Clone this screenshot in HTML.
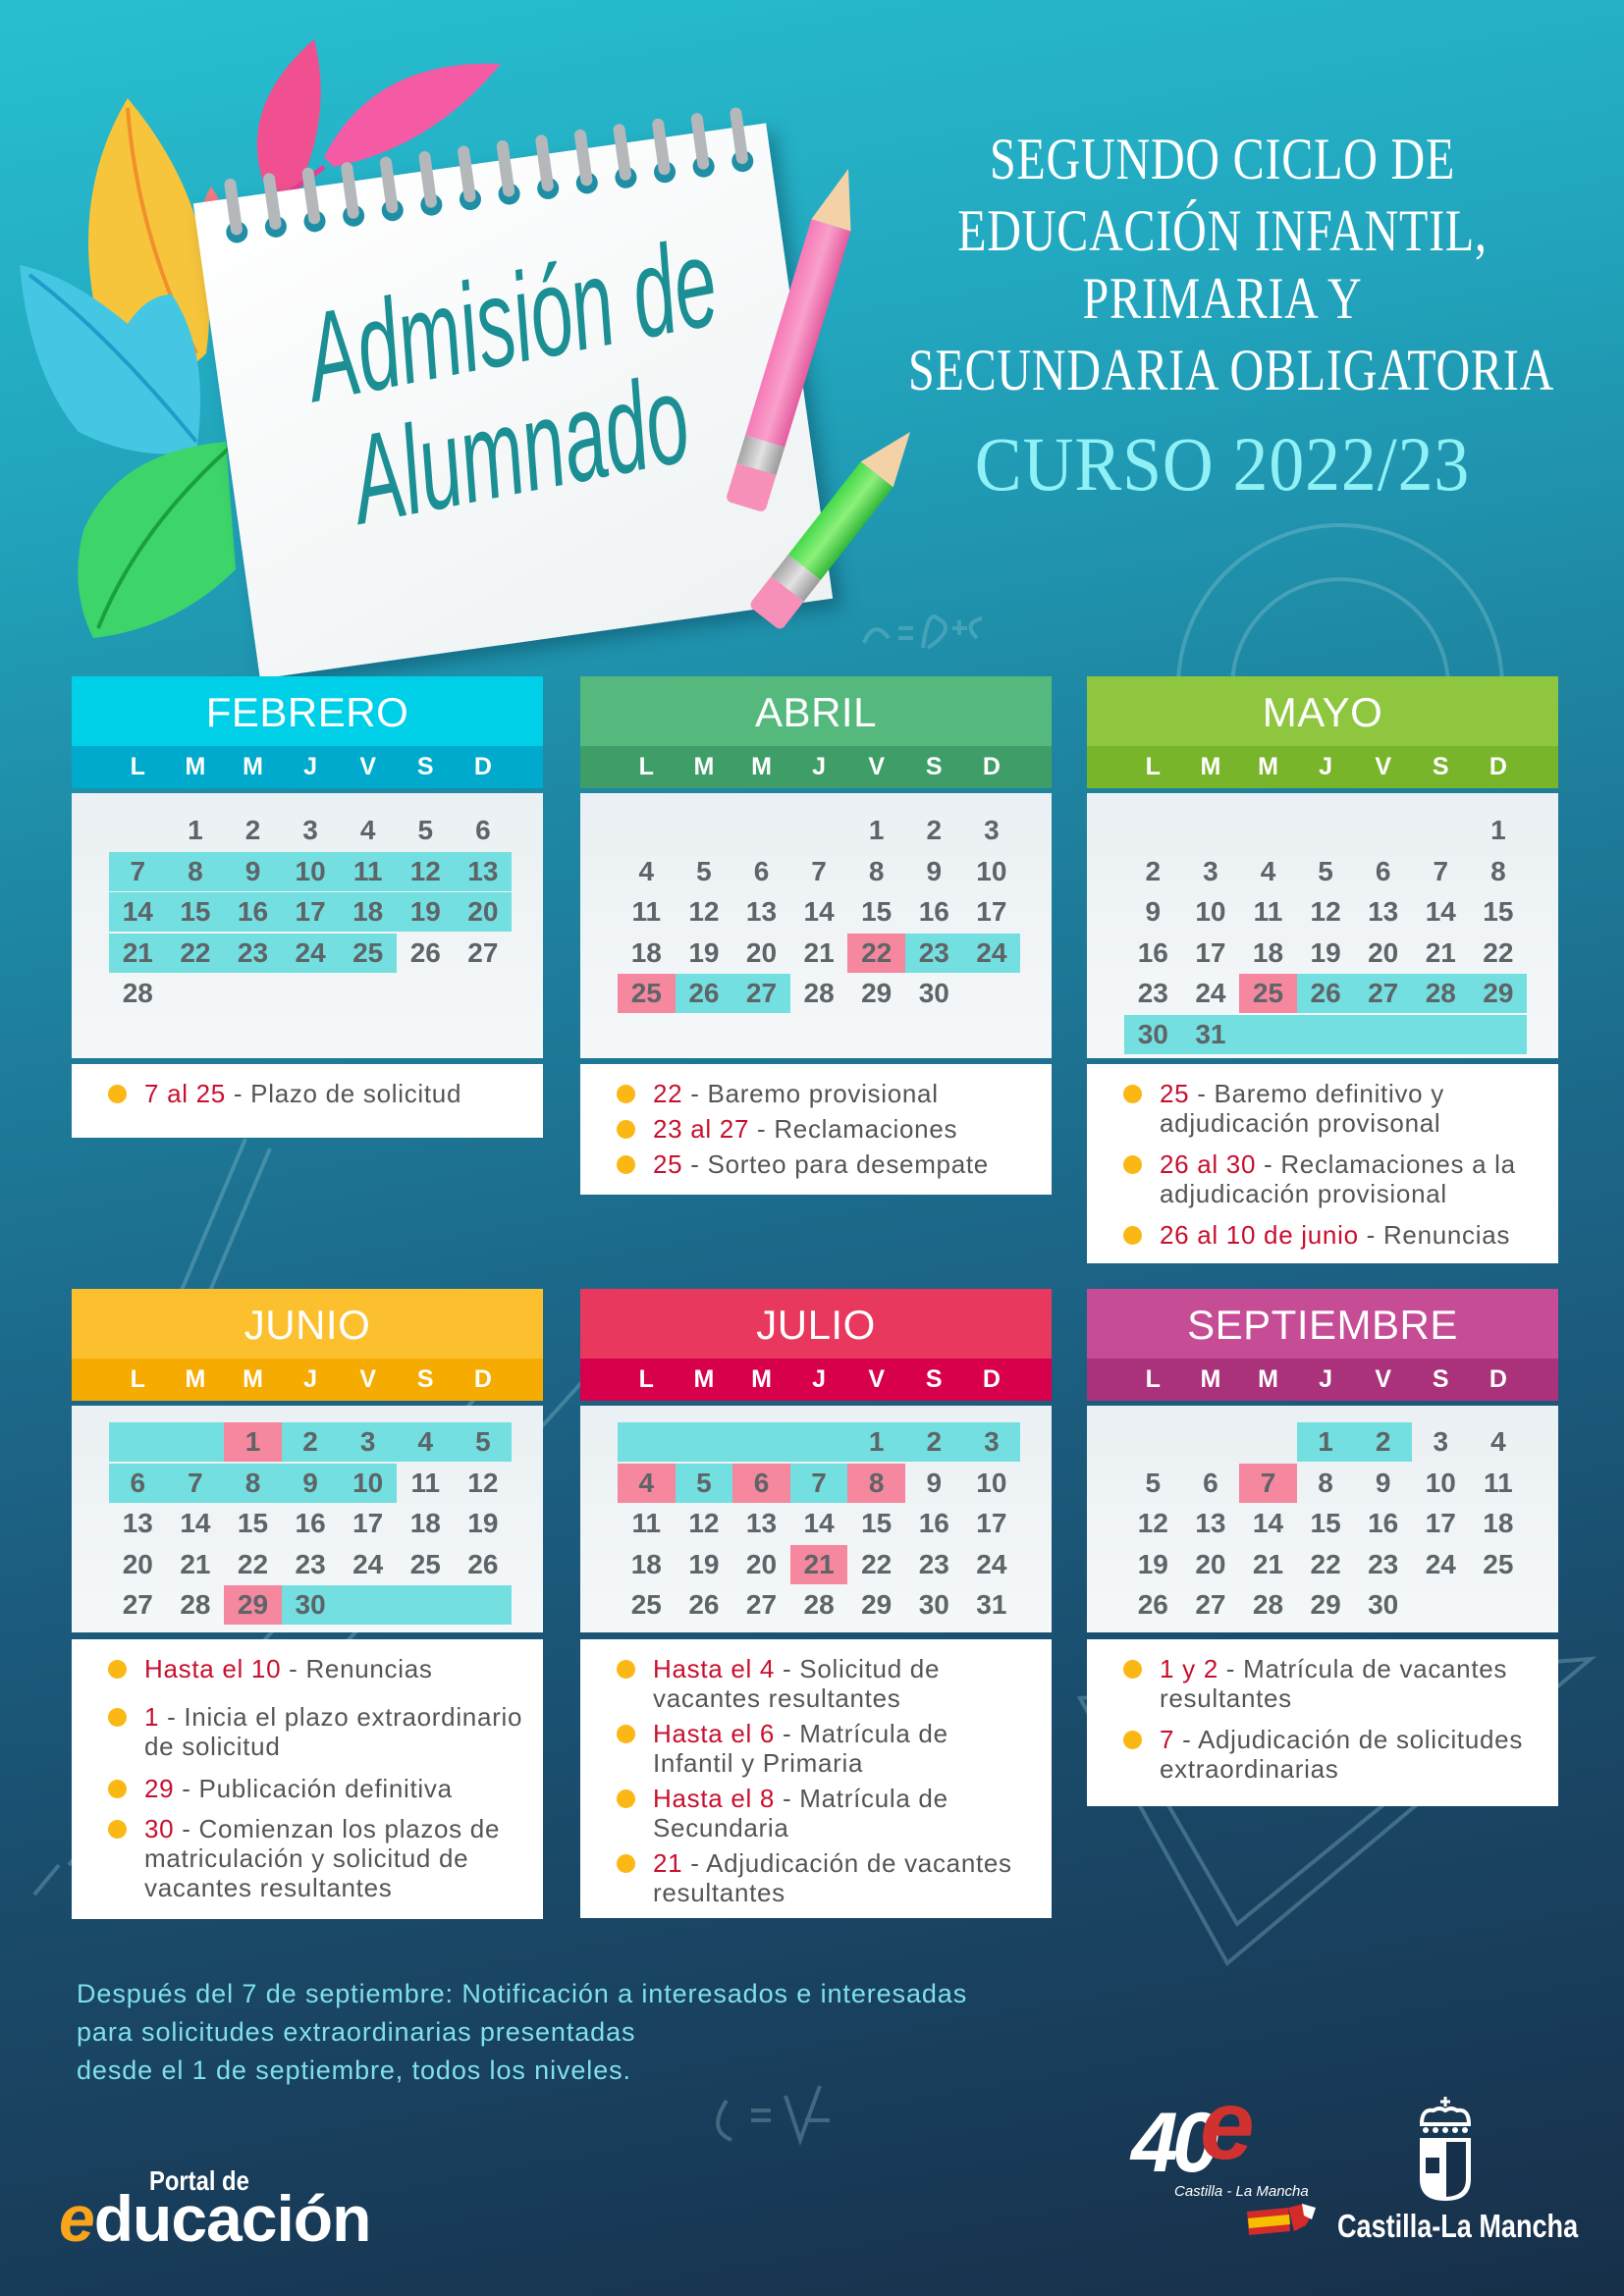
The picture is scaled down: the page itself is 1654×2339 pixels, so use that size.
<!DOCTYPE html>
<html><head><meta charset="utf-8">
<style>
*{margin:0;padding:0;box-sizing:border-box}
body{width:1654px;height:2339px;position:relative;overflow:hidden;font-family:"Liberation Sans",sans-serif;
background:linear-gradient(170deg,#28bfd0 0%,#22a7bf 18%,#1e86a2 36%,#1c6688 55%,#1a4a6a 75%,#172f49 100%);}
.abs{position:absolute}
.card{position:absolute;width:480px}
.tit{height:71px;color:#fff;font-size:42px;text-align:center;line-height:73px;letter-spacing:0.5px}
.dr{height:43px;display:grid;grid-template-columns:repeat(7,58.6px);padding-left:38px;color:#fff;font-weight:bold;font-size:25px;line-height:43px;text-align:center}
.body{position:absolute;left:0;width:480px;background:linear-gradient(180deg,#eaf0f3,#f5f8f9);padding-left:38px}
.r{display:grid;grid-template-columns:repeat(7,58.6px);height:39px;margin-bottom:2.5px}
.r span{text-align:center;line-height:40px;font-weight:bold;font-size:28px;color:#5e6467}
.r .t{background:#73dfe0}
.r .p{background:#f5879f}
.notes{position:absolute;left:0;width:480px;background:#fff;padding:15px 0 0 74px;color:#555;font-size:26px;letter-spacing:0.7px;line-height:30px;white-space:nowrap}
.notes div{position:relative;margin-bottom:12px}
.notes div:before{content:"";position:absolute;left:-37px;top:6px;width:19px;height:19px;border-radius:50%;background:#fbb714}
.notes b{font-weight:normal;color:#c8102e}
.hd{position:absolute;left:845px;width:800px;text-align:center;color:#fff;font-family:"Liberation Serif",serif;font-size:60px;transform:scaleX(0.8);transform-origin:400px 0;white-space:nowrap;letter-spacing:1px}
</style></head><body>

<svg class="abs" style="left:0;top:0" width="1654" height="2339">
<g fill="none" stroke="#9fd0dc" stroke-opacity="0.3" stroke-width="4">
<path d="M1200 700 A165 165 0 0 1 1530 700"/>
<path d="M1255 700 A110 110 0 0 1 1475 700"/>
<path d="M880 655 q10 -25 25 -5 M915 640 h15 M915 650 h15 M940 660 q5 -40 15 -30 q20 10 -10 30 M970 640 h15 M977 632 v15 M995 650 q-15 -15 5 -20"/>
<path d="M250 1160 L170 1350 M275 1170 L195 1360 M160 1360 l-5 40"/>
<path d="M540 1360 L70 1900 M600 1400 L120 1930 M60 1900 l-25 30"/>
<path d="M1100 1730 L1620 1690 L1250 2000 Z M1150 1770 L1530 1740 L1260 1960 Z"/>
<path d="M740 2140 q-20 30 5 40 M765 2150 h20 M765 2160 h20 M800 2135 l15 45 l20 -55 M820 2160 h25"/>
</g>
</svg>

<svg class="abs" style="left:0;top:0" width="900" height="700">
<path d="M270 190 Q240 110 320 40 Q340 120 300 200 Z" fill="#f0508f"/>
<path d="M330 160 Q380 60 510 65 Q440 150 340 170 Z" fill="#f55aa5"/>
<path d="M330 170 L250 230" stroke="#e24090" stroke-width="5"/>
<path d="M215 190 Q190 230 220 300 Q250 240 215 190Z" fill="#f07a80"/>
<path d="M130 100 Q70 200 100 330 Q150 420 210 360 Q230 220 130 100Z" fill="#f7c53b"/>
<path d="M130 110 Q140 240 200 360" stroke="#f0902c" stroke-width="4" fill="none"/>
<path d="M20 270 Q70 280 130 330 Q150 300 175 300 Q215 360 200 460 Q140 470 80 440 Q30 380 20 270Z" fill="#45c7e3"/>
<path d="M30 280 Q110 340 200 450" stroke="#1aa0c8" stroke-width="4" fill="none"/>
<path d="M230 450 Q120 460 85 540 Q70 600 95 650 Q180 640 240 580 Z" fill="#3dd46a"/>
<path d="M235 455 Q140 540 100 640" stroke="#18a040" stroke-width="4" fill="none"/>
</svg>

<div class="abs" style="left:228px;top:164px;width:589px;height:489px;transform:rotate(-8deg);background:linear-gradient(160deg,#ffffff,#eef2f3);box-shadow:8px 10px 18px rgba(0,40,60,.35)">
 <svg class="abs" style="left:0;top:-40px" width="589" height="100">
  <g>
  <circle cx="40" cy="75" r="11" fill="#1f8fa6"/><rect x="34" y="20" width="12" height="58" rx="6" fill="#b5b8bb"/>
  <circle cx="80" cy="75" r="11" fill="#1f8fa6"/><rect x="74" y="20" width="12" height="58" rx="6" fill="#b5b8bb"/>
  <circle cx="120" cy="75" r="11" fill="#1f8fa6"/><rect x="114" y="20" width="12" height="58" rx="6" fill="#b5b8bb"/>
  <circle cx="160" cy="75" r="11" fill="#1f8fa6"/><rect x="154" y="20" width="12" height="58" rx="6" fill="#b5b8bb"/>
  <circle cx="200" cy="75" r="11" fill="#1f8fa6"/><rect x="194" y="20" width="12" height="58" rx="6" fill="#b5b8bb"/>
  <circle cx="240" cy="75" r="11" fill="#1f8fa6"/><rect x="234" y="20" width="12" height="58" rx="6" fill="#b5b8bb"/>
  <circle cx="280" cy="75" r="11" fill="#1f8fa6"/><rect x="274" y="20" width="12" height="58" rx="6" fill="#b5b8bb"/>
  <circle cx="320" cy="75" r="11" fill="#1f8fa6"/><rect x="314" y="20" width="12" height="58" rx="6" fill="#b5b8bb"/>
  <circle cx="360" cy="75" r="11" fill="#1f8fa6"/><rect x="354" y="20" width="12" height="58" rx="6" fill="#b5b8bb"/>
  <circle cx="400" cy="75" r="11" fill="#1f8fa6"/><rect x="394" y="20" width="12" height="58" rx="6" fill="#b5b8bb"/>
  <circle cx="440" cy="75" r="11" fill="#1f8fa6"/><rect x="434" y="20" width="12" height="58" rx="6" fill="#b5b8bb"/>
  <circle cx="480" cy="75" r="11" fill="#1f8fa6"/><rect x="474" y="20" width="12" height="58" rx="6" fill="#b5b8bb"/>
  <circle cx="520" cy="75" r="11" fill="#1f8fa6"/><rect x="514" y="20" width="12" height="58" rx="6" fill="#b5b8bb"/>
  <circle cx="560" cy="75" r="11" fill="#1f8fa6"/><rect x="554" y="20" width="12" height="58" rx="6" fill="#b5b8bb"/>
  </g>
 </svg>
 <div class="abs" style="left:-25px;top:100px;width:589px;text-align:center;font-style:italic;font-size:128px;line-height:130px;color:#1b8f93;transform:rotate(-3deg) scaleX(0.6);white-space:nowrap">Admisión de</div>
 <div class="abs" style="left:0px;top:230px;width:589px;text-align:center;font-style:italic;font-size:128px;line-height:130px;color:#1b8f93;transform:rotate(-3deg) scaleX(0.6);white-space:nowrap">Alumnado</div>
</div>

<div class="abs" style="left:843px;top:172px;width:42px;height:370px;transform:rotate(17deg);transform-origin:21px 0">
 <div style="width:0;height:0;border-left:21px solid transparent;border-right:21px solid transparent;border-bottom:60px solid #f4d2a8;position:relative"></div>
 <div style="width:42px;height:230px;background:linear-gradient(90deg,#f67ab8,#f9a0cc,#e45c9e)"></div>
 <div style="width:42px;height:30px;background:linear-gradient(90deg,#a5a5a5,#e2e2e2,#9a9a9a)"></div>
 <div style="width:42px;height:40px;background:#f690b8;border-radius:0 0 6px 6px"></div>
</div>
<div class="abs" style="left:906px;top:440px;width:42px;height:250px;transform:rotate(38deg);transform-origin:21px 0">
 <div style="width:0;height:0;border-left:21px solid transparent;border-right:21px solid transparent;border-bottom:55px solid #f4d2a8"></div>
 <div style="width:42px;height:120px;background:linear-gradient(90deg,#45d94a,#8cf07a,#34b83a)"></div>
 <div style="width:42px;height:28px;background:linear-gradient(90deg,#a5a5a5,#e2e2e2,#9a9a9a)"></div>
 <div style="width:42px;height:38px;background:#f690b8;border-radius:0 0 6px 6px"></div>
</div>

<div class="hd" style="top:128px">SEGUNDO CICLO DE</div>
<div class="hd" style="top:201px">EDUCACIÓN INFANTIL,</div>
<div class="hd" style="top:270px">PRIMARIA Y</div>
<div class="hd" style="top:343px">SECUNDARIA OBLIGATORIA</div>
<div class="hd" style="top:428px;font-size:78px;color:#8ff1f6;transform:scaleX(0.92)">CURSO 2022/23</div>

<div class="card" style="left:73px;top:689px">
 <div class="tit" style="background:#00cfe8">FEBRERO</div>
 <div class="dr" style="background:#00aacd"><span>L</span><span>M</span><span>M</span><span>J</span><span>V</span><span>S</span><span>D</span></div>
 <div class="body" style="top:119px;height:270px;padding-top:18px">
  <div class="r"><span></span><span>1</span><span>2</span><span>3</span><span>4</span><span>5</span><span>6</span></div>
  <div class="r"><span class="t">7</span><span class="t">8</span><span class="t">9</span><span class="t">10</span><span class="t">11</span><span class="t">12</span><span class="t">13</span></div>
  <div class="r"><span class="t">14</span><span class="t">15</span><span class="t">16</span><span class="t">17</span><span class="t">18</span><span class="t">19</span><span class="t">20</span></div>
  <div class="r"><span class="t">21</span><span class="t">22</span><span class="t">23</span><span class="t">24</span><span class="t">25</span><span>26</span><span>27</span></div>
  <div class="r"><span>28</span></div>
 </div>
 <div class="notes" style="top:395px;height:75px">
  <div><b>7 al 25</b> - Plazo de solicitud</div>
 </div>
</div>

<div class="card" style="left:591px;top:689px">
 <div class="tit" style="background:#55b97e">ABRIL</div>
 <div class="dr" style="background:#3f9e68"><span>L</span><span>M</span><span>M</span><span>J</span><span>V</span><span>S</span><span>D</span></div>
 <div class="body" style="top:119px;height:270px;padding-top:18px">
  <div class="r"><span></span><span></span><span></span><span></span><span>1</span><span>2</span><span>3</span></div>
  <div class="r"><span>4</span><span>5</span><span>6</span><span>7</span><span>8</span><span>9</span><span>10</span></div>
  <div class="r"><span>11</span><span>12</span><span>13</span><span>14</span><span>15</span><span>16</span><span>17</span></div>
  <div class="r"><span>18</span><span>19</span><span>20</span><span>21</span><span class="p">22</span><span class="t">23</span><span class="t">24</span></div>
  <div class="r"><span class="p">25</span><span class="t">26</span><span class="t">27</span><span>28</span><span>29</span><span>30</span></div>
 </div>
 <div class="notes" style="top:395px;height:133px;line-height:30px">
  <div style="margin-bottom:6px"><b>22</b> - Baremo provisional</div>
  <div style="margin-bottom:6px"><b>23 al 27</b> - Reclamaciones</div>
  <div><b>25</b> - Sorteo para desempate</div>
 </div>
</div>

<div class="card" style="left:1107px;top:689px">
 <div class="tit" style="background:#8ec63f">MAYO</div>
 <div class="dr" style="background:#79b52a"><span>L</span><span>M</span><span>M</span><span>J</span><span>V</span><span>S</span><span>D</span></div>
 <div class="body" style="top:119px;height:270px;padding-top:18px">
  <div class="r"><span></span><span></span><span></span><span></span><span></span><span></span><span>1</span></div>
  <div class="r"><span>2</span><span>3</span><span>4</span><span>5</span><span>6</span><span>7</span><span>8</span></div>
  <div class="r"><span>9</span><span>10</span><span>11</span><span>12</span><span>13</span><span>14</span><span>15</span></div>
  <div class="r"><span>16</span><span>17</span><span>18</span><span>19</span><span>20</span><span>21</span><span>22</span></div>
  <div class="r"><span>23</span><span>24</span><span class="p">25</span><span class="t">26</span><span class="t">27</span><span class="t">28</span><span class="t">29</span></div>
  <div class="r"><span class="t">30</span><span class="t">31</span><span class="t"></span><span class="t"></span><span class="t"></span><span class="t"></span><span class="t"></span></div>
 </div>
 <div class="notes" style="top:395px;height:203px">
  <div><b>25</b> - Baremo definitivo y<br>adjudicación provisonal</div>
  <div><b>26 al 30</b> - Reclamaciones a la<br>adjudicación provisional</div>
  <div><b>26 al 10 de junio</b> - Renuncias</div>
 </div>
</div>

<div class="card" style="left:73px;top:1313px">
 <div class="tit" style="background:#fcc02e">JUNIO</div>
 <div class="dr" style="background:#f6ab00"><span>L</span><span>M</span><span>M</span><span>J</span><span>V</span><span>S</span><span>D</span></div>
 <div class="body" style="top:119px;height:231px;padding-top:17px">
  <div class="r"><span class="t"></span><span class="t"></span><span class="p">1</span><span class="t">2</span><span class="t">3</span><span class="t">4</span><span class="t">5</span></div>
  <div class="r"><span class="t">6</span><span class="t">7</span><span class="t">8</span><span class="t">9</span><span class="t">10</span><span>11</span><span>12</span></div>
  <div class="r"><span>13</span><span>14</span><span>15</span><span>16</span><span>17</span><span>18</span><span>19</span></div>
  <div class="r"><span>20</span><span>21</span><span>22</span><span>23</span><span>24</span><span>25</span><span>26</span></div>
  <div class="r"><span>27</span><span>28</span><span class="p">29</span><span class="t">30</span><span class="t"></span><span class="t"></span><span class="t"></span></div>
 </div>
 <div class="notes" style="top:357px;height:285px">
  <div style="margin-bottom:19px"><b>Hasta el 10</b> - Renuncias</div>
  <div style="margin-bottom:13px"><b>1</b> - Inicia el plazo extraordinario<br>de solicitud</div>
  <div style="margin-bottom:11px"><b>29</b> - Publicación definitiva</div>
  <div><b>30</b> - Comienzan los plazos de<br>matriculación y solicitud de<br>vacantes resultantes</div>
 </div>
</div>

<div class="card" style="left:591px;top:1313px">
 <div class="tit" style="background:#e9385e">JULIO</div>
 <div class="dr" style="background:#d8004d"><span>L</span><span>M</span><span>M</span><span>J</span><span>V</span><span>S</span><span>D</span></div>
 <div class="body" style="top:119px;height:231px;padding-top:17px">
  <div class="r"><span class="t"></span><span class="t"></span><span class="t"></span><span class="t"></span><span class="t">1</span><span class="t">2</span><span class="t">3</span></div>
  <div class="r"><span class="p">4</span><span class="t">5</span><span class="p">6</span><span class="t">7</span><span class="p">8</span><span>9</span><span>10</span></div>
  <div class="r"><span>11</span><span>12</span><span>13</span><span>14</span><span>15</span><span>16</span><span>17</span></div>
  <div class="r"><span>18</span><span>19</span><span>20</span><span class="p">21</span><span>22</span><span>23</span><span>24</span></div>
  <div class="r"><span>25</span><span>26</span><span>27</span><span>28</span><span>29</span><span>30</span><span>31</span></div>
 </div>
 <div class="notes" style="top:357px;height:284px">
  <div style="margin-bottom:6px"><b>Hasta el 4</b> - Solicitud de<br>vacantes resultantes</div>
  <div style="margin-bottom:6px"><b>Hasta el 6</b> - Matrícula de<br>Infantil y Primaria</div>
  <div style="margin-bottom:6px"><b>Hasta el 8</b> - Matrícula de<br>Secundaria</div>
  <div><b>21</b> - Adjudicación de vacantes<br>resultantes</div>
 </div>
</div>

<div class="card" style="left:1107px;top:1313px">
 <div class="tit" style="background:#c64c95">SEPTIEMBRE</div>
 <div class="dr" style="background:#a9327b"><span>L</span><span>M</span><span>M</span><span>J</span><span>V</span><span>S</span><span>D</span></div>
 <div class="body" style="top:119px;height:231px;padding-top:17px">
  <div class="r"><span></span><span></span><span></span><span class="t">1</span><span class="t">2</span><span>3</span><span>4</span></div>
  <div class="r"><span>5</span><span>6</span><span class="p">7</span><span>8</span><span>9</span><span>10</span><span>11</span></div>
  <div class="r"><span>12</span><span>13</span><span>14</span><span>15</span><span>16</span><span>17</span><span>18</span></div>
  <div class="r"><span>19</span><span>20</span><span>21</span><span>22</span><span>23</span><span>24</span><span>25</span></div>
  <div class="r"><span>26</span><span>27</span><span>28</span><span>29</span><span>30</span></div>
 </div>
 <div class="notes" style="top:357px;height:170px">
  <div><b>1 y 2</b> - Matrícula de vacantes<br>resultantes</div>
  <div><b>7</b> - Adjudicación de solicitudes<br>extraordinarias</div>
 </div>
</div>

<div class="abs" style="left:78px;top:2012px;color:#7fe0ea;font-size:27px;letter-spacing:0.9px;line-height:39px;white-space:nowrap">Después del 7 de septiembre: Notificación a interesados e interesadas<br>para solicitudes extraordinarias presentadas<br>desde el 1 de septiembre, todos los niveles.</div>

<div class="abs" style="left:152px;top:2206px;color:#fff;font-weight:bold;font-size:28px;transform:scaleX(.85);transform-origin:0 0">Portal de</div>
<div class="abs" style="left:60px;top:2232px;font-weight:bold;font-size:66px;line-height:56px;color:#fff;white-space:nowrap;letter-spacing:-1px"><span style="color:#f8a51b;font-style:italic">e</span>ducación</div>

<div class="abs" style="left:1152px;top:2138px;color:#fff;font-style:italic;font-weight:bold;font-size:86px;line-height:90px;letter-spacing:-6px">40</div>
<div class="abs" style="left:1222px;top:2115px;color:#d2322f;font-style:italic;font-weight:bold;font-size:100px;line-height:100px">e</div>
<div class="abs" style="left:1196px;top:2224px;color:#fff;font-style:italic;font-size:15px;white-space:nowrap">Castilla - La Mancha</div>
<svg class="abs" style="left:1268px;top:2243px" width="76" height="38">
<path d="M2 10 L44 6 L46 30 L4 34 Z" fill="#d42a2a"/><path d="M3 17 L45 13 L46 23 L4 27 Z" fill="#f6c000"/>
<path d="M44 6 L60 2 L70 10 L62 24 L50 30 Z" fill="#d42a2a"/><path d="M58 2 L72 6 L68 18 L60 14 Z" fill="#fff"/>
</svg>

<svg class="abs" style="left:1440px;top:2134px" width="64" height="112">
<path d="M32 2 v10 M27 7 h10" stroke="#fff" stroke-width="3"/>
<path d="M8 30 q0 -16 12 -14 q6 -4 12 0 q6 -4 12 0 q12 -2 12 14 Z" fill="none" stroke="#fff" stroke-width="4"/>
<circle cx="12" cy="36" r="3" fill="#fff"/><circle cx="22" cy="36" r="3" fill="#fff"/><circle cx="32" cy="36" r="3" fill="#fff"/><circle cx="42" cy="36" r="3" fill="#fff"/><circle cx="52" cy="36" r="3" fill="#fff"/>
<path d="M6 44 h52 v42 q0 22 -26 22 q-26 0 -26 -22 Z" fill="#fff"/>
<path d="M33 48 h20 v38 q0 17 -20 18 Z" fill="#17304a"/>
<rect x="12" y="64" width="14" height="16" fill="#17304a"/>
</svg>
<div class="abs" style="left:1362px;top:2249px;color:#fff;font-weight:bold;font-size:33px;transform:scaleX(.82);transform-origin:0 0;white-space:nowrap">Castilla-La Mancha</div>

</body></html>
